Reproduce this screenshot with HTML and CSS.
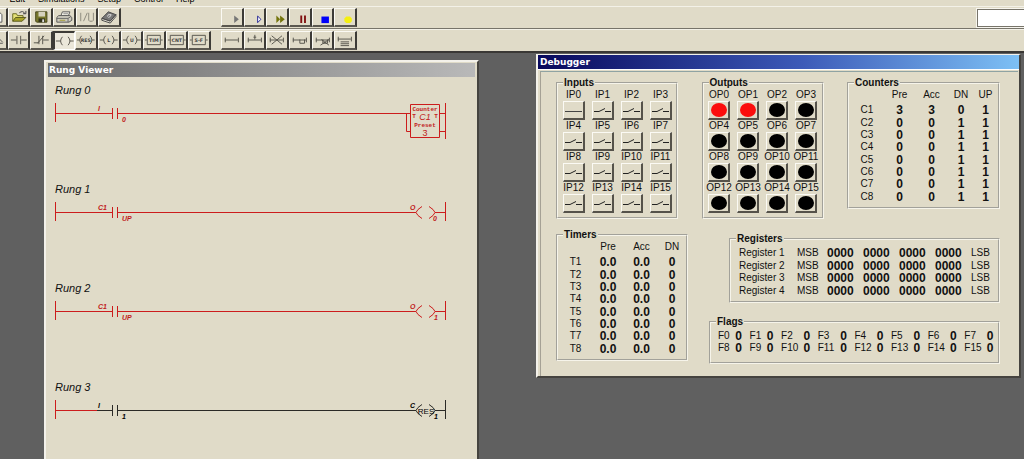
FILE: index.html
```html
<!DOCTYPE html>
<html lang="en">
<head>
<meta charset="utf-8">
<title>Ladder Simulator</title>
<link rel="stylesheet" href="styles.css">
</head>
<body>
<svg class="defs" aria-hidden="true">
  <symbol id="switch" viewBox="0 0 19 16"><path d="M1 9.500h5l6-3M12 9.500h6" fill="none" stroke="#222"/></symbol>
</svg>
<div class="app">
  <nav class="menu">
    <button>File</button><button>Edit</button><button>Simulations</button><button>Setup</button><button>Control</button><button>Help</button>
  </nav>
  <div class="toolbar">
    <div class="group">
      <button class="tool" aria-label="New"><svg viewBox="0 0 21 17"><path d="M8 3h6l3 3v8H8z" fill="#fff" stroke="#555"/></svg></button>
      <button class="tool" aria-label="Open"><svg viewBox="0 0 21 17"><path d="M11 4q4-3 6 1m1-3v3h-3" stroke="#444" fill="none"/><path d="M4 13V5h4l1 2h6v2" fill="#e6e27a" stroke="#66661e"/><path d="M4 13l3-4h11l-4 4z" fill="#a9a42a" stroke="#55551a"/></svg></button>
      <button class="tool" aria-label="Save"><svg viewBox="0 0 21 17"><path d="M5 3h12v11H6l-1-1z" fill="#77772c" stroke="#44441c"/><path d="M8 3h7v5H8z" fill="#d5d1bd"/><path d="M8 10h7v4H8z" fill="#33331c"/><path d="M12 11h2v3h-2z" fill="#ddd"/></svg></button>
      <button class="tool" aria-label="Print"><svg viewBox="0 0 21 17"><path d="M7 8l2-5h8l-2 5" fill="#f6f4ea" stroke="#555"/><path d="M10 5h5M9 7h5" stroke="#888"/><path d="M3 9l2-2h12l2 2v3l-3 2H3z" fill="#cfccc0" stroke="#555"/><path d="M3 10h12l3-2M15 10v4" fill="none" stroke="#666"/><path d="M6 12h6" stroke="#a39a30"/></svg></button>
      <button class="tool" aria-label="Inputs and outputs"><svg viewBox="0 0 21 17"><path d="M4 4v9M7 13l4-9M12.500 4v8l1 1h3l1-1V4" fill="none" stroke="#8a877b"/></svg></button>
      <button class="tool" aria-label="Help"><svg viewBox="0 0 21 17"><path d="M3 10l7-7 8 3-6 7z" fill="#777" stroke="#444"/><path d="M3 10v2l9 3 6-7V6l-6 7z" fill="#e8e5d9" stroke="#444"/><path d="M9 8l1-2 3 0-1 2-2 1" fill="none" stroke="#ddd"/></svg></button>
    </div>
    <div class="group">
      <button class="tool" aria-label="Run"><svg viewBox="0 0 21 17"><path d="M13 7l5 4-5 4z" fill="#777"/></svg></button>
      <button class="tool" aria-label="Step"><svg viewBox="0 0 21 17"><path d="M13.500 7.500l3.500 3.500-3.500 3.500z" fill="#fff" stroke="#1c1c90"/></svg></button>
      <button class="tool" aria-label="Fast forward"><svg viewBox="0 0 21 17"><path d="M10 7l4 4-4 4zM14 7l5 4-5 4z" fill="#74740c"/></svg></button>
      <button class="tool" aria-label="Pause"><svg viewBox="0 0 21 17"><path d="M11 7h2v8h-2zM15 7h2v8h-2z" fill="#801010"/></svg></button>
      <button class="tool" aria-label="Stop"><svg viewBox="0 0 21 17"><path d="M9 8h8v7H9z" fill="#0000fa"/></svg></button>
      <button class="tool" aria-label="Record"><svg viewBox="0 0 21 17"><path d="M12 8h4l2 2v3l-2 2h-4l-2-2v-3z" fill="#f5f010"/></svg></button>
    </div>
    <input class="readout" type="text" aria-label="Scan time">
  </div>
  <div class="toolbar toolbar-parts">
    <div class="group group-parts">
      <button class="tool" aria-label="Select"><svg viewBox="0 0 21 17"><path d="M14 7l4 4M14 12h4" stroke="#555"/></svg></button>
      <button class="tool" aria-label="Contact open"><svg viewBox="0 0 21 17"><path d="M2 8.500h6M13 8.500h6M8.500 4v9M12.500 4v9" stroke="#55524a"/></svg></button>
      <button class="tool" aria-label="Contact closed"><svg viewBox="0 0 21 17"><path d="M3 11.500h5M13 8.500h6M8.500 4v9M12.500 4v9M7 12l7-8" stroke="#55524a"/></svg></button>
      <button class="tool pressed" aria-label="Coil"><svg viewBox="0 0 21 17"><path d="M1 8.500h5M16 8.500h4M8 4q-4 4.500 0 9M14 4q4 4.500 0 9" fill="none" stroke="#55524a"/></svg></button>
      <button class="tool" aria-label="Reset coil"><svg viewBox="0 0 21 17"><path d="M1 8.500h3M17 8.500h3M6 4q-4 4.500 0 9M15 4q4 4.500 0 9" fill="none" stroke="#55524a"/><text x="10.500" y="11" class="glyph">RES</text></svg></button>
      <button class="tool" aria-label="Latch coil"><svg viewBox="0 0 21 17"><path d="M1 8.500h4M16 8.500h4M7 4q-4 4.500 0 9M14 4q4 4.500 0 9" fill="none" stroke="#55524a"/><text x="10.500" y="11" class="glyph">L</text></svg></button>
      <button class="tool" aria-label="Unlatch coil"><svg viewBox="0 0 21 17"><path d="M1 8.500h4M16 8.500h4M7 4q-4 4.500 0 9M14 4q4 4.500 0 9" fill="none" stroke="#55524a"/><text x="10.500" y="11" class="glyph">U</text></svg></button>
      <button class="tool" aria-label="Timer"><svg viewBox="0 0 21 17"><path d="M1 8.500h2M18 8.500h2M3.500 3.500h14v10h-14z" fill="none" stroke="#55524a"/><text x="10.500" y="11" class="glyph">TIM</text></svg></button>
      <button class="tool" aria-label="Counter"><svg viewBox="0 0 21 17"><path d="M1 8.500h2M18 8.500h2M3.500 3.500h14v10h-14z" fill="none" stroke="#55524a"/><text x="10.500" y="11" class="glyph">CNT</text></svg></button>
      <button class="tool" aria-label="Shift register"><svg viewBox="0 0 21 17"><path d="M1 8.500h2M18 8.500h2M3.500 3.500h14v10h-14z" fill="none" stroke="#55524a"/><text x="10.500" y="11" class="glyph">S-F</text></svg></button>
    </div>
    <div class="group">
      <button class="tool" aria-label="Rung"><svg viewBox="0 0 21 17"><path d="M3 8.500h14M3.500 6v5M17.500 6v5" stroke="#55524a"/></svg></button>
      <button class="tool" aria-label="Insert rung"><svg viewBox="0 0 21 17"><path d="M3 8.500h14M3.500 6v5M17.500 6v5M10.500 3v5M9 5.500h3" stroke="#55524a"/></svg></button>
      <button class="tool" aria-label="Delete rung"><svg viewBox="0 0 21 17"><path d="M3 8.500h14M3.500 6v5M17.500 6v5M5 4l11 9M16 4L5 13" stroke="#55524a"/></svg></button>
      <button class="tool" aria-label="Branch"><svg viewBox="0 0 21 17"><path d="M3 8.500h14M3.500 6v5M17.500 6v5M10.500 8v4h5v-4" fill="none" stroke="#55524a"/></svg></button>
      <button class="tool" aria-label="Delete branch"><svg viewBox="0 0 21 17"><path d="M3 8.500h14M3.500 6v5M17.500 6v5M10.500 8v4h5v-4M8 14l9-6M9 8l8 6" fill="none" stroke="#55524a"/></svg></button>
      <button class="tool" aria-label="Comment"><svg viewBox="0 0 21 17"><path d="M3 7.500h14M3.500 5v5M17.500 5v5M6 10.500h9M6 12.500h9M6 14.500h9" stroke="#55524a"/></svg></button>
    </div>
  </div>

  <main class="desktop">
    <section class="window rung-viewer">
      <h2 class="title title-idle">Rung Viewer</h2>
      <div class="rungs">
        <div class="rung"><h3>Rung 0</h3>
          <svg class="live" viewBox="0 0 392 87"><path d="M.5 7v19M390.500 7v36M1 17.500h56M62 17.500h293M57.500 12v11M62.500 12v11M351.500 17v18.500h4M385 17.500h6M385 35.500h6M355.500 8.500h29v33h-29z"/><text x="43" y="15" class="tag">I</text><text x="67" y="26" class="tag">0</text><text x="370" y="15" class="block">Counter</text><text x="359" y="22" class="block">T</text><text x="381" y="22" class="block">T</text><text x="370" y="24" class="value tilt">C1</text><text x="370" y="31" class="block">Preset</text><text x="370" y="40" class="value">3</text></svg></div>
        <div class="rung"><h3>Rung 1</h3>
          <svg class="live" viewBox="0 0 392 87"><path d="M.5 7v19M390.500 7v19M1 17.500h56M62 17.500h299M57.500 12v11M62.500 12v11M367 11.500l-4 3-2 3 2 3 4 3M374 11.500l4 3 2 3-2 3-4 3M380 17.500h11"/><text x="43" y="15" class="tag">C1</text><text x="67" y="26" class="tag">UP</text><text x="355" y="15" class="tag">O</text><text x="378" y="26" class="tag">0</text></svg></div>
        <div class="rung"><h3>Rung 2</h3>
          <svg class="live" viewBox="0 0 392 87"><path d="M.5 7v19M390.500 7v19M1 17.500h56M62 17.500h299M57.500 12v11M62.500 12v11M367 11.500l-4 3-2 3 2 3 4 3M374 11.500l4 3 2 3-2 3-4 3M380 17.500h11"/><text x="43" y="15" class="tag">C1</text><text x="67" y="26" class="tag">UP</text><text x="355" y="15" class="tag">O</text><text x="379" y="26" class="tag">1</text></svg></div>
        <div class="rung"><h3>Rung 3</h3>
          <svg class="dead" viewBox="0 0 392 87"><path d="M390.500 7v19M42 17.500h15M62 17.500h299M57.500 12v11M62.500 12v11M367 11.500l-4 3-2 3 2 3 4 3M374 11.500l4 3 2 3-2 3-4 3M380 17.500h11"/><path class="powered" d="M.5 7v19M1 17.500h41"/><text x="43" y="15" class="tag">I</text><text x="67" y="26" class="tag">1</text><text x="355" y="15" class="tag">C</text><text x="371" y="21" class="reset">RES</text><text x="379" y="26" class="tag">1</text></svg></div>
      </div>
    </section>

    <section class="window debugger">
      <h2 class="title title-active">Debugger</h2>
      <div class="panels">
        <div class="row">
          <fieldset><legend>Inputs</legend>
            <div class="points">
              <div class="point"><label for="ip0">IP0</label><button id="ip0"><svg viewBox="0 0 19 16"><path d="M1 9.500h17" stroke="#444"/></svg></button></div>
              <div class="point"><label for="ip1">IP1</label><button id="ip1"><svg><use href="#switch"/></svg></button></div>
              <div class="point"><label for="ip2">IP2</label><button id="ip2"><svg><use href="#switch"/></svg></button></div>
              <div class="point"><label for="ip3">IP3</label><button id="ip3"><svg><use href="#switch"/></svg></button></div>
              <div class="point"><label for="ip4">IP4</label><button id="ip4"><svg><use href="#switch"/></svg></button></div>
              <div class="point"><label for="ip5">IP5</label><button id="ip5"><svg><use href="#switch"/></svg></button></div>
              <div class="point"><label for="ip6">IP6</label><button id="ip6"><svg><use href="#switch"/></svg></button></div>
              <div class="point"><label for="ip7">IP7</label><button id="ip7"><svg><use href="#switch"/></svg></button></div>
              <div class="point"><label for="ip8">IP8</label><button id="ip8"><svg><use href="#switch"/></svg></button></div>
              <div class="point"><label for="ip9">IP9</label><button id="ip9"><svg><use href="#switch"/></svg></button></div>
              <div class="point"><label for="ip10">IP10</label><button id="ip10"><svg><use href="#switch"/></svg></button></div>
              <div class="point"><label for="ip11">IP11</label><button id="ip11"><svg><use href="#switch"/></svg></button></div>
              <div class="point"><label for="ip12">IP12</label><button id="ip12"><svg><use href="#switch"/></svg></button></div>
              <div class="point"><label for="ip13">IP13</label><button id="ip13"><svg><use href="#switch"/></svg></button></div>
              <div class="point"><label for="ip14">IP14</label><button id="ip14"><svg><use href="#switch"/></svg></button></div>
              <div class="point"><label for="ip15">IP15</label><button id="ip15"><svg><use href="#switch"/></svg></button></div>
            </div>
          </fieldset>
          <fieldset><legend>Outputs</legend>
            <div class="points">
              <div class="point"><label for="op0">OP0</label><button id="op0"><span class="lamp on"></span></button></div>
              <div class="point"><label for="op1">OP1</label><button id="op1"><span class="lamp on"></span></button></div>
              <div class="point"><label for="op2">OP2</label><button id="op2"><span class="lamp"></span></button></div>
              <div class="point"><label for="op3">OP3</label><button id="op3"><span class="lamp"></span></button></div>
              <div class="point"><label for="op4">OP4</label><button id="op4"><span class="lamp"></span></button></div>
              <div class="point"><label for="op5">OP5</label><button id="op5"><span class="lamp"></span></button></div>
              <div class="point"><label for="op6">OP6</label><button id="op6"><span class="lamp"></span></button></div>
              <div class="point"><label for="op7">OP7</label><button id="op7"><span class="lamp"></span></button></div>
              <div class="point"><label for="op8">OP8</label><button id="op8"><span class="lamp"></span></button></div>
              <div class="point"><label for="op9">OP9</label><button id="op9"><span class="lamp"></span></button></div>
              <div class="point"><label for="op10">OP10</label><button id="op10"><span class="lamp"></span></button></div>
              <div class="point"><label for="op11">OP11</label><button id="op11"><span class="lamp"></span></button></div>
              <div class="point"><label for="op12">OP12</label><button id="op12"><span class="lamp"></span></button></div>
              <div class="point"><label for="op13">OP13</label><button id="op13"><span class="lamp"></span></button></div>
              <div class="point"><label for="op14">OP14</label><button id="op14"><span class="lamp"></span></button></div>
              <div class="point"><label for="op15">OP15</label><button id="op15"><span class="lamp"></span></button></div>
            </div>
          </fieldset>
          <fieldset><legend>Counters</legend>
            <table class="states counters">
              <thead><tr><td></td><th>Pre</th><th>Acc</th><th>DN</th><th>UP</th></tr></thead>
              <tbody>
                <tr><th>C1</th><td>3</td><td>3</td><td>0</td><td>1</td></tr>
                <tr><th>C2</th><td>0</td><td>0</td><td>1</td><td>1</td></tr>
                <tr><th>C3</th><td>0</td><td>0</td><td>1</td><td>1</td></tr>
                <tr><th>C4</th><td>0</td><td>0</td><td>1</td><td>1</td></tr>
                <tr><th>C5</th><td>0</td><td>0</td><td>1</td><td>1</td></tr>
                <tr><th>C6</th><td>0</td><td>0</td><td>1</td><td>1</td></tr>
                <tr><th>C7</th><td>0</td><td>0</td><td>1</td><td>1</td></tr>
                <tr><th>C8</th><td>0</td><td>0</td><td>1</td><td>1</td></tr>
              </tbody>
            </table>
          </fieldset>
        </div>
        <div class="row">
          <fieldset><legend>Timers</legend>
            <table class="states timers">
              <thead><tr><td></td><th>Pre</th><th>Acc</th><th>DN</th></tr></thead>
              <tbody>
                <tr><th>T1</th><td>0.0</td><td>0.0</td><td>0</td></tr>
                <tr><th>T2</th><td>0.0</td><td>0.0</td><td>0</td></tr>
                <tr><th>T3</th><td>0.0</td><td>0.0</td><td>0</td></tr>
                <tr><th>T4</th><td>0.0</td><td>0.0</td><td>0</td></tr>
                <tr><th>T5</th><td>0.0</td><td>0.0</td><td>0</td></tr>
                <tr><th>T6</th><td>0.0</td><td>0.0</td><td>0</td></tr>
                <tr><th>T7</th><td>0.0</td><td>0.0</td><td>0</td></tr>
                <tr><th>T8</th><td>0.0</td><td>0.0</td><td>0</td></tr>
              </tbody>
            </table>
          </fieldset>
          <div class="stack">
            <fieldset><legend>Registers</legend>
              <table class="registers">
                <tr><th>Register 1</th><th>MSB</th><td>0000</td><td>0000</td><td>0000</td><td>0000</td><th>LSB</th></tr>
                <tr><th>Register 2</th><th>MSB</th><td>0000</td><td>0000</td><td>0000</td><td>0000</td><th>LSB</th></tr>
                <tr><th>Register 3</th><th>MSB</th><td>0000</td><td>0000</td><td>0000</td><td>0000</td><th>LSB</th></tr>
                <tr><th>Register 4</th><th>MSB</th><td>0000</td><td>0000</td><td>0000</td><td>0000</td><th>LSB</th></tr>
              </table>
            </fieldset>
            <fieldset><legend>Flags</legend>
              <table class="flags">
                <tr><th>F0</th><td>0</td><th>F1</th><td>0</td><th>F2</th><td>0</td><th>F3</th><td>0</td><th>F4</th><td>0</td><th>F5</th><td>0</td><th>F6</th><td>0</td><th>F7</th><td>0</td></tr>
                <tr><th>F8</th><td>0</td><th>F9</th><td>0</td><th>F10</th><td>0</td><th>F11</th><td>0</td><th>F12</th><td>0</td><th>F13</th><td>0</td><th>F14</th><td>0</td><th>F15</th><td>0</td></tr>
              </table>
            </fieldset>
          </div>
        </div>
      </div>
    </section>
  </main>
</div>
</body>
</html>
```
FILE: styles.css
```css
* { box-sizing: border-box; }
body { margin: 0; font: 10px/12px "Liberation Sans", Arial, sans-serif; color: #111; }
button { font: inherit; color: inherit; padding: 0; margin: 0; border: 0; background: none; }
h2, h3 { margin: 0; }
.defs { position: absolute; width: 0; height: 0; }
.app { display: flex; flex-direction: column; height: 100vh; overflow: hidden; background: #e0dbc8; }

.menu { display: flex; align-items: flex-end; gap: 13px; height: 6px; margin-left: -18px; overflow: hidden; font-size: 9px; line-height: 14px; }
.menu button { flex: none; color: #000; }

.toolbar { display: flex; align-items: center; flex: none; height: 23px; border-top: 1px solid #f3f1e8; border-bottom: 1px solid #77746a; }
.toolbar-parts { height: 24px; border-bottom: 2px solid #3a3835; }
.group { display: grid; grid-auto-flow: column; grid-auto-columns: 1fr; flex: none; width: 136px; height: 19px; }
.group:first-child { margin-left: -15px; margin-right: 100px; }
.group-parts.group { width: 226px; margin-right: 10px; }
.tool { border: 1px solid #fbfaf4; border-right: 2px solid #3d3b37; border-bottom: 2px solid #5b5850; background: #e0dbc8; }
.tool svg { display: block; width: 100%; height: 16px; }
.tool.pressed { border: 2px solid #3d3b37; border-right: 1px solid #fff; border-bottom: 1px solid #fff; background: #ebe7da; }
.glyph { font: bold 5px "DejaVu Sans", sans-serif; text-anchor: middle; fill: #444; }
.readout { width: 47px; height: 18px; margin-left: auto; padding: 0; border: 1px solid #77746a; border-right: 0; background: #fff; outline: 1px solid #f7f5ee; }

.desktop { position: relative; flex: 1; overflow: hidden; background: #606060; }
.window { position: absolute; background: #e0dbc8; border: 2px solid #f3f1ea; border-right-color: #45433f; border-bottom-color: #45433f; }
.rung-viewer { left: 44px; top: 7px; width: 435px; padding: 1px 2px; }
.debugger { left: 536px; top: 1px; width: 485px; border-top-width: 1px; }
.title { font: bold 9px/14px "DejaVu Sans", Verdana, sans-serif; color: #fff; padding-left: 1px; }
.title-idle { background: linear-gradient(to right, #6b6b6b, #b9b9b9); }
.title-active { background: linear-gradient(to right, #08085c, #3c5ab8 55%, #7dc0f5); border-bottom: 1px solid #fff; padding-left: 2px; }

.rungs { padding: 7px; }
.rung h3 { font: italic 11px/12px "Liberation Sans", Arial, sans-serif; }
.rung svg { display: block; width: 392px; height: 87px; overflow: visible; }
.rung path { fill: none; stroke-width: 1; }
.live path, .dead .powered { stroke: #cc1c1c; }
.live text { fill: #c01c1c; }
.dead path { stroke: #2b2a26; }
.tag { font: italic bold 7px "Liberation Sans", sans-serif; }
.block { font: bold 6px "Liberation Mono", monospace; text-anchor: middle; }
.value { font: 9px "Liberation Sans", sans-serif; text-anchor: middle; }
.tilt { font-style: italic; }
.reset { font: 8px "Liberation Sans", sans-serif; text-anchor: middle; }

.panels { display: flex; flex-direction: column; gap: 10px; padding: 5px 18px 12px 15px; margin: 1px 1px 0 2px; border-left: 1px solid #a5a195; border-top: 1px solid #8fa3a3; }
.row { display: flex; justify-content: space-between; align-items: flex-start; }
.stack { display: flex; flex-direction: column; align-items: flex-end; gap: 13px; padding-top: 4px; }
fieldset { min-width: 0; margin: 0; padding: 0 1px 4px; border: 2px groove #f6f4ea; }
legend { margin-left: 4px; padding: 0 1px; font-weight: bold; }

.points { display: grid; grid-template-columns: repeat(4, 29px); }
.point { display: flex; flex-direction: column; align-items: center; }
.point button { display: flex; align-items: center; justify-content: center; width: 22px; height: 19px; border: 1px solid #fbfaf4; border-right: 2px solid #55524a; border-bottom: 2px solid #55524a; }
.point svg { flex: none; width: 19px; height: 16px; }
.lamp { width: 16px; height: 14px; border-radius: 50%; background: #000; }
.lamp.on { background: #fb0d0d; }

table { border-collapse: collapse; table-layout: fixed; }
th, td { padding: 0; height: 12px; white-space: nowrap; }
th { font-weight: normal; }
td { font-size: 12px; font-weight: bold; }
.states { height: 114px; text-align: center; }
.states thead th { padding-bottom: 3px; }
.counters { width: 147px; }
.counters thead :nth-child(1) { width: 34px; }
.counters thead :nth-child(2) { width: 31px; }
.counters thead :nth-child(3) { width: 33px; }
.counters thead :nth-child(4) { width: 26px; }
.timers { width: 126px; }
.timers thead :nth-child(1) { width: 33px; }
.timers thead :nth-child(2) { width: 32px; }
.timers thead :nth-child(3) { width: 35px; }
.registers { width: 258px; height: 50px; margin: 2px 0 0 7px; text-align: left; }
.registers th:first-child { width: 58px; }
.registers th:nth-child(2) { width: 30px; }
.registers td { width: 36px; }
.flags { width: 279px; margin: 2px 0 4px 6px; text-align: left; }
.flags th { width: 22px; }
.flags td { width: 14px; }
.flags th:nth-child(1), .flags th:nth-child(3) { width: 17px; }
.flags td:last-child { width: 10px; }
```
